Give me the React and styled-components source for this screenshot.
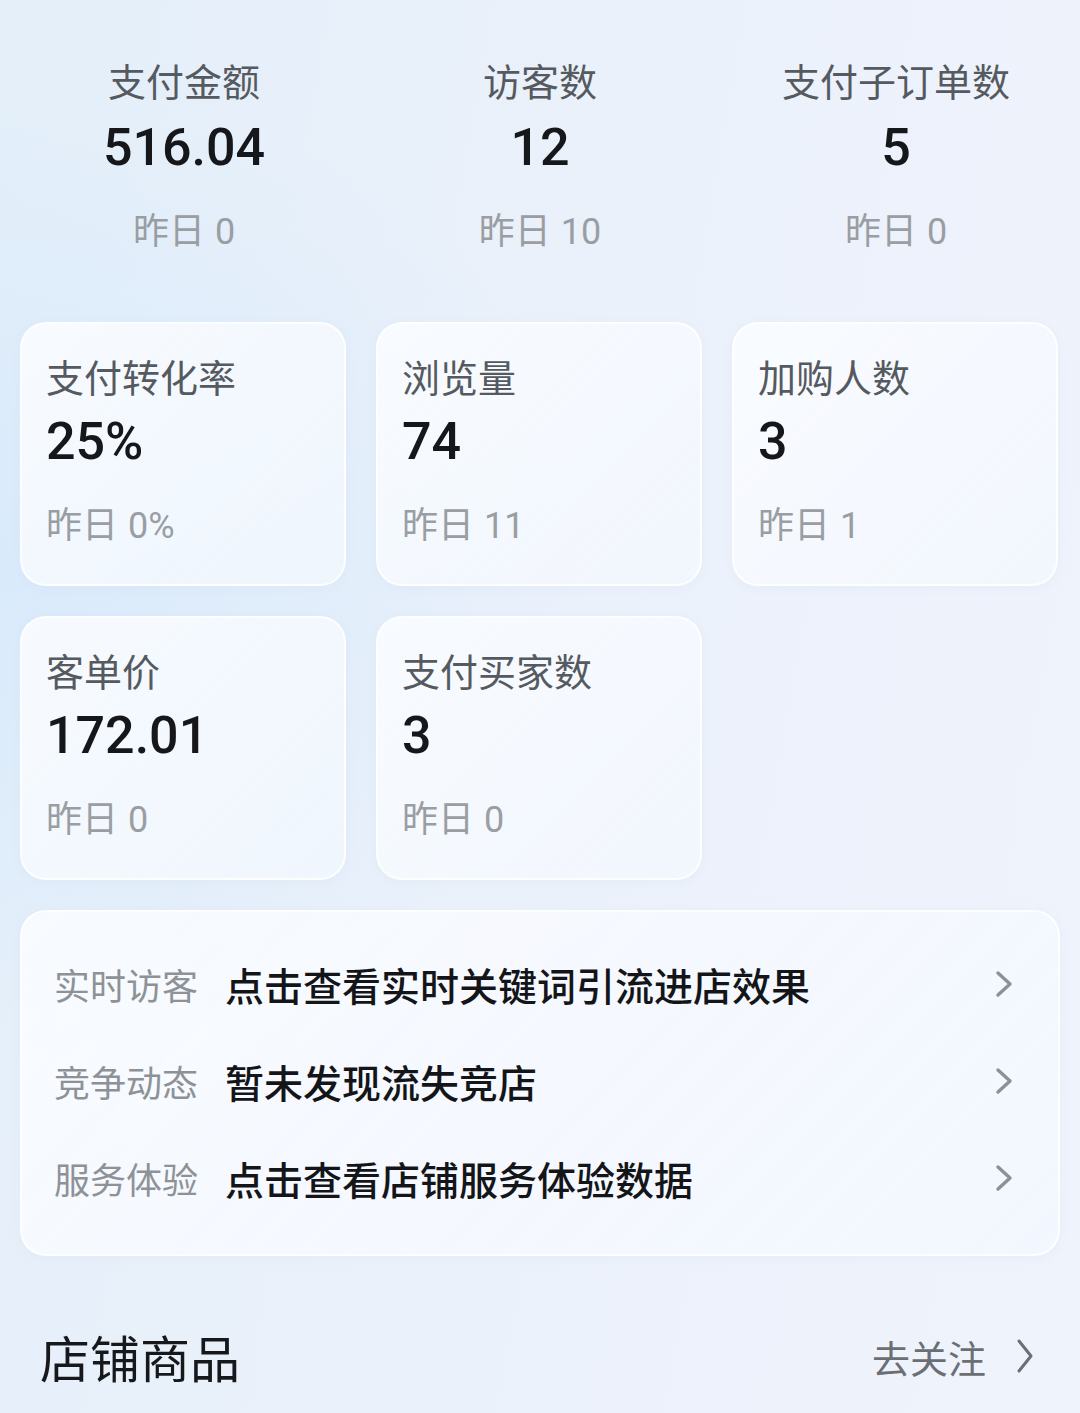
import React from "react";
import styled, { createGlobalStyle } from "styled-components";

const GlobalStyle = createGlobalStyle`
  html, body {
    margin: 0;
    padding: 0;
  }
  body {
    font-family: Roboto, "Noto Sans CJK SC", sans-serif;
    background: #eaf1fb;
    min-height: 1413px;
  }
`;

const Page = styled.div`
  width: 1080px;
  min-height: 1413px;
  box-sizing: border-box;
  padding: 56px 20px 0 20px;
  background:
    radial-gradient(ellipse 600px 500px at 0% 40%, rgba(214, 233, 252, 0.8), rgba(214, 233, 252, 0)),
    linear-gradient(100deg, #e4eff9 0%, #ebf1fb 50%, #eff3fc 100%);
`;

const Summary = styled.div`
  display: grid;
  grid-template-columns: repeat(3, 1fr);
  margin: 0 -14px;
`;

const SummaryItem = styled.div`
  display: flex;
  flex-direction: column;
  align-items: center;
`;

const Label = styled.div`
  font-family: "Noto Sans CJK SC", sans-serif;
  font-size: 38px;
  line-height: 48px;
  color: #555a60;
`;

const Value = styled.div`
  font-family: Roboto, "Noto Sans CJK SC", sans-serif;
  font-size: 52px;
  font-weight: 500;
  line-height: 60px;
  color: #15171a;
  margin-top: ${p => p.$gap}px;
`;

const Yesterday = styled.div`
  font-family: Roboto, "Noto Sans CJK SC", sans-serif;
  font-size: 36px;
  line-height: 48px;
  color: #9a9ea3;
  margin-top: ${p => p.$gap}px;
  span {
    font-family: "Noto Sans CJK SC", sans-serif;
    margin-right: 10px;
  }
`;

const CardGrid = styled.div`
  display: grid;
  grid-template-columns: repeat(3, 326px);
  gap: 30px;
  margin-top: 66px;
`;

const Card = styled.div`
  box-sizing: border-box;
  height: 264px;
  padding: 28px 24px 0 24px;
  border-radius: 26px;
  background: linear-gradient(135deg, rgba(250, 252, 255, 0.9), rgba(243, 248, 254, 0.75));
  border: 2px solid rgba(255, 255, 255, 0.8);
  box-shadow: 0 2px 10px rgba(190, 205, 230, 0.15);
`;

const LinkCard = styled.div`
  box-sizing: border-box;
  margin-top: 30px;
  width: 1040px;
  padding: 23px 45px 28px 32px;
  border-radius: 26px;
  background: linear-gradient(135deg, rgba(250, 252, 255, 0.9), rgba(243, 247, 254, 0.8));
  border: 2px solid rgba(255, 255, 255, 0.8);
  box-shadow: 0 2px 10px rgba(190, 205, 230, 0.15);
`;

const LinkRow = styled.div`
  display: flex;
  align-items: center;
  height: 97px;
`;

const LinkLabel = styled.div`
  font-family: "Noto Sans CJK SC", sans-serif;
  font-size: 36px;
  color: #8e9297;
  width: 171px;
  flex-shrink: 0;
`;

const LinkText = styled.div`
  flex: 1;
  font-family: "Noto Sans CJK SC", sans-serif;
  font-size: 39px;
  font-weight: 500;
  color: #141518;
`;

const Section = styled.div`
  display: flex;
  align-items: center;
  justify-content: space-between;
  height: 60px;
  margin-top: 70px;
  padding: 0 26px 0 20px;
`;

const SectionTitle = styled.div`
  font-family: "Noto Sans CJK SC", sans-serif;
  font-size: 50px;
  color: #16181b;
`;

const Follow = styled.div`
  display: flex;
  align-items: center;
  gap: 30px;
  font-family: "Noto Sans CJK SC", sans-serif;
  font-size: 38px;
  color: #6b6f74;
`;

const Chevron = ({ w = 18, h = 28, color = "#8d9196", stroke = 3.4 }) => (
  <svg width={w} height={h} viewBox={`0 0 18 ${h}`} fill="none">
    <path d={`M3 3 L15 ${h / 2} L3 ${h - 3}`} stroke={color} strokeWidth={stroke} strokeLinecap="round" strokeLinejoin="round" />
  </svg>
);

const summary = [
  { label: "支付金额", value: "516.04", prev: "0" },
  { label: "访客数", value: "12", prev: "10" },
  { label: "支付子订单数", value: "5", prev: "0" },
];

const cards = [
  { label: "支付转化率", value: "25%", prev: "0%" },
  { label: "浏览量", value: "74", prev: "11" },
  { label: "加购人数", value: "3", prev: "1" },
  { label: "客单价", value: "172.01", prev: "0" },
  { label: "支付买家数", value: "3", prev: "0" },
];

const links = [
  { label: "实时访客", text: "点击查看实时关键词引流进店效果" },
  { label: "竞争动态", text: "暂未发现流失竞店" },
  { label: "服务体验", text: "点击查看店铺服务体验数据" },
];

export default function App() {
  return (
    <>
      <GlobalStyle />
      <Page>
        <Summary>
          {summary.map(s => (
            <SummaryItem key={s.label}>
              <Label>{s.label}</Label>
              <Value $gap={14}>{s.value}</Value>
              <Yesterday $gap={26}><span>昨日</span>{s.prev}</Yesterday>
            </SummaryItem>
          ))}
        </Summary>
        <CardGrid>
          {cards.map(c => (
            <Card key={c.label}>
              <Label>{c.label}</Label>
              <Value $gap={12}>{c.value}</Value>
              <Yesterday $gap={26}><span>昨日</span>{c.prev}</Yesterday>
            </Card>
          ))}
        </CardGrid>
        <LinkCard>
          {links.map(l => (
            <LinkRow key={l.label}>
              <LinkLabel>{l.label}</LinkLabel>
              <LinkText>{l.text}</LinkText>
              <Chevron />
            </LinkRow>
          ))}
        </LinkCard>
        <Section>
          <SectionTitle>店铺商品</SectionTitle>
          <Follow>
            去关注
            <Chevron w={18} h={36} color="#6b6f74" stroke={3} />
          </Follow>
        </Section>
      </Page>
    </>
  );
}
